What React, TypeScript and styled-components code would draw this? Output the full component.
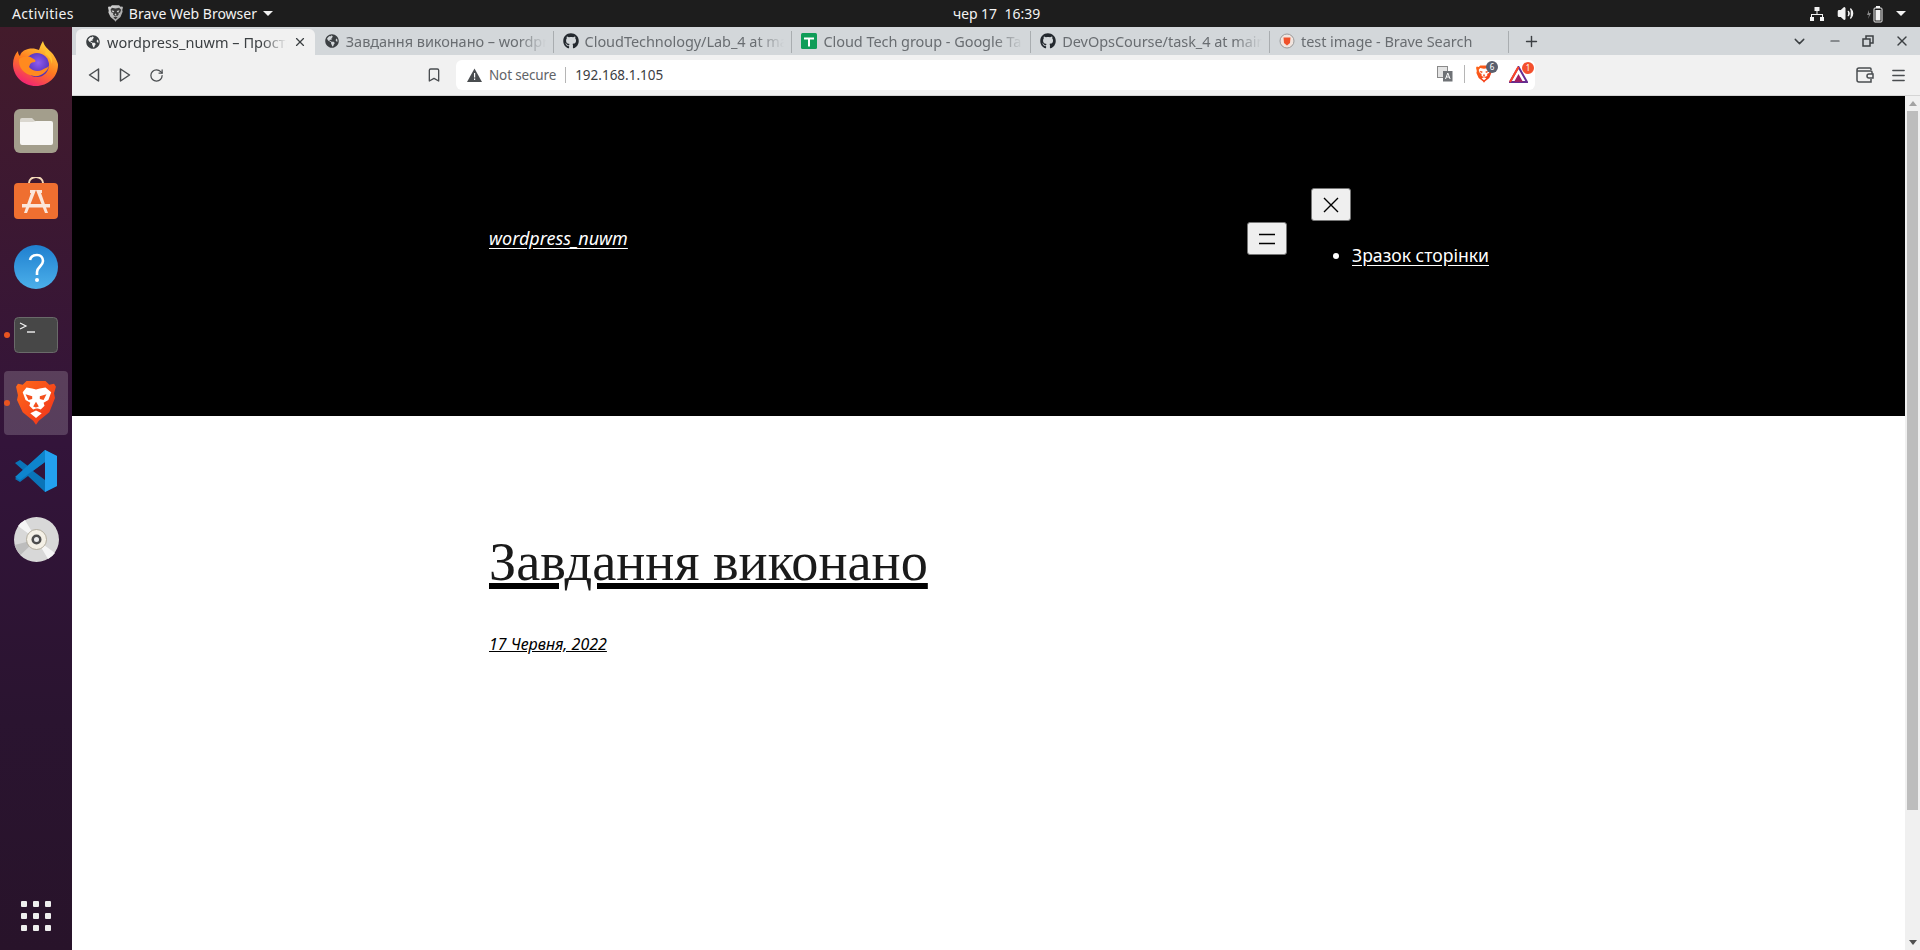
import React from 'react';
import styled, { createGlobalStyle } from 'styled-components';
import {
  Bookmark,
  ChevronDown,
  Menu,
  Minus,
  Plus,
  RotateCw,
  Volume2,
  X,
} from 'lucide-react';
import { FaGithub, FaGlobeAmericas } from 'react-icons/fa';

const UI_FONT = `"Noto Sans", "Open Sans", sans-serif`;

const GlobalStyle = createGlobalStyle`
  html, body {
    margin: 0;
    padding: 0;
    overflow: hidden;
    background: #fff;
  }
  * {
    box-sizing: border-box;
  }
`;

const Screen = styled.div`
  width: 1920px;
  height: 950px;
  display: flex;
  flex-direction: column;
  overflow: hidden;
  font-family: ${UI_FONT};
`;

/* ---------- gnome top bar ---------- */
const TopBar = styled.div`
  height: 27px;
  flex: none;
  display: grid;
  grid-template-columns: 953px auto 1fr;
  align-items: center;
  background: #1d1d1d;
  color: #f2f2f2;
  font-size: 14px;
`;
const TopLeft = styled.div`
  display: flex;
  align-items: center;
  padding-left: 12px;
`;
const Activities = styled.span`
  letter-spacing: 0.35px;
`;
const AppName = styled.div`
  display: flex;
  align-items: center;
  gap: 6px;
  margin-left: 34px;
`;
const Clock = styled.div`
  white-space: pre;
`;
const TopRight = styled.div`
  display: flex;
  align-items: center;
  justify-content: flex-end;
  gap: 12px;
  padding-right: 14px;
`;
const Caret = styled.span`
  width: 0;
  height: 0;
  border-left: 5px solid transparent;
  border-right: 5px solid transparent;
  border-top: 5px solid #f2f2f2;
`;

const Body = styled.div`
  flex: 1;
  display: flex;
  min-height: 0;
`;

/* ---------- dock ---------- */
const Dock = styled.div`
  width: 72px;
  flex: none;
  display: flex;
  flex-direction: column;
  align-items: center;
  background: linear-gradient(180deg, #431b2b 0%, #33143a 45%, #2a1430 75%, #28132a 100%);
`;
const DockItem = styled.div<{ $active?: boolean; $running?: boolean }>`
  position: relative;
  width: 64px;
  height: 64px;
  margin-bottom: 4px;
  display: flex;
  align-items: center;
  justify-content: center;
  border-radius: 4px;
  background: ${({ $active }) => ($active ? 'rgba(255,255,255,0.18)' : 'transparent')};
  &::before {
    content: '';
    display: ${({ $running }) => ($running ? 'block' : 'none')};
    position: absolute;
    left: 0;
    top: 29px;
    width: 6px;
    height: 6px;
    border-radius: 50%;
    background: #e95420;
  }
`;
const DockList = styled.div`
  padding-top: 4px;
`;
const AppGrid = styled.div`
  margin-top: auto;
  margin-bottom: 19px;
  display: grid;
  grid-template-columns: repeat(3, 6px);
  gap: 6px;
`;
const AppDot = styled.span`
  width: 6px;
  height: 6px;
  border-radius: 1px;
  background: #eeeeee;
`;

/* ---------- browser ---------- */
const BrowserWindow = styled.div`
  flex: 1;
  min-width: 0;
  display: flex;
  flex-direction: column;
`;
const TabStrip = styled.div`
  height: 28px;
  flex: none;
  display: flex;
  align-items: flex-end;
  background: #d3d7da;
  padding-left: 4px;
`;
const Tab = styled.div<{ $active?: boolean }>`
  width: 238.8px;
  height: ${({ $active }) => ($active ? '26px' : '28px')};
  flex: none;
  display: flex;
  align-items: center;
  gap: 6px;
  padding: 0 8px 0 9px;
  background: ${({ $active }) => ($active ? '#f1f1f1' : 'transparent')};
  border-radius: 6px 6px 0 0;
  color: ${({ $active }) => ($active ? '#3c4043' : '#696d71')};
  font-size: 14.5px;
  letter-spacing: ${({ $active }) => ($active ? '0.05px' : '-0.05px')};
  position: relative;
  &::after {
    content: '';
    display: ${({ $active }) => ($active ? 'none' : 'block')};
    position: absolute;
    right: 0;
    top: 4px;
    bottom: 2px;
    width: 1px;
    background: #a9adb0;
  }
`;
const TabIcon = styled.span`
  width: 16px;
  height: 16px;
  flex: none;
  display: flex;
  align-items: center;
  justify-content: center;
  color: #3c4043;
`;
const TabTitle = styled.span`
  flex: 1;
  min-width: 0;
  overflow: hidden;
  white-space: nowrap;
  mask-image: linear-gradient(90deg, #000 86%, transparent 100%);
`;
const StripActions = styled.div`
  flex: 1;
  height: 28px;
  display: flex;
  align-items: center;
  color: #3c4043;
  padding-left: 14px;
`;
const WindowButtons = styled.div`
  margin-left: auto;
  display: flex;
  align-items: center;
  gap: 20px;
  padding-right: 10px;
`;

const Toolbar = styled.div`
  height: 41px;
  flex: none;
  display: flex;
  align-items: center;
  background: #f1f1f1;
  border-bottom: 1px solid #d5d5d5;
  color: #4a4d50;
  padding-left: 15px;
`;
const NavButtons = styled.div`
  display: flex;
  align-items: center;
  gap: 17px;
  width: 369px;
`;
const BookmarkSlot = styled.span`
  display: flex;
  margin-left: auto;
  margin-right: 14px;
`;
const Omnibox = styled.div`
  width: 1079px;
  height: 30px;
  display: flex;
  align-items: center;
  background: #fff;
  border-radius: 6px;
  padding: 0 7px 0 11px;
  font-size: 13.5px;
  letter-spacing: -0.15px;
  margin-top: -1px;
`;
const SecurityText = styled.span`
  color: #5f6368;
  margin-left: 7px;
  padding-right: 9px;
  border-right: 1px solid #b5b5b5;
  line-height: 16px;
`;
const Url = styled.span`
  color: #3c4043;
  margin-left: 9px;
  letter-spacing: 0;
`;
const OmniRight = styled.div`
  margin-left: auto;
  display: flex;
  align-items: center;
`;
const OmniDivider = styled.span`
  width: 1px;
  height: 18px;
  background: #b5b5b5;
  margin: 0 11px 0 11px;
`;
const BadgeWrap = styled.span<{ $gap?: number }>`
  position: relative;
  display: flex;
  margin-left: ${({ $gap }) => $gap ?? 0}px;
`;
const Badge = styled.span<{ $bg: string }>`
  position: absolute;
  top: -4px;
  right: -6px;
  min-width: 12px;
  height: 12px;
  border-radius: 6px;
  background: ${({ $bg }) => $bg};
  color: #fff;
  font-size: 8px;
  line-height: 12px;
  text-align: center;
  letter-spacing: 0;
`;
const ToolbarRight = styled.div`
  margin-left: auto;
  display: flex;
  align-items: center;
  gap: 16px;
  padding-right: 13px;
`;

/* ---------- page ---------- */
const Viewport = styled.div`
  flex: 1;
  min-height: 0;
  display: flex;
`;
const Page = styled.div`
  flex: 1;
  min-width: 0;
  background: #fff;
`;
const Hero = styled.header`
  height: 320px;
  background: #000;
  color: #fff;
  display: flex;
  align-items: flex-start;
  padding: 92px 0 0 417px;
`;
const SiteTitle = styled.a`
  width: 758px;
  margin-top: 38px;
  font-size: 18px;
  line-height: 24px;
  font-style: italic;
  color: #fff;
  text-decoration: underline;
  text-underline-offset: 3px;
`;
const MenuButton = styled.button`
  width: 40px;
  height: 33px;
  padding: 0;
  flex: none;
  display: flex;
  align-items: center;
  justify-content: center;
  background: #efefef;
  border: 1px solid #767676;
  border-radius: 3px;
  color: #000;
`;
const OpenButton = styled(MenuButton)`
  margin-top: 34px;
  margin-right: 24px;
`;
const NavColumn = styled.div`
  display: flex;
  flex-direction: column;
`;
const NavList = styled.ul`
  margin: 18px 0 0;
  padding: 0 0 0 41px;
  font-size: 17.6px;
  line-height: 33px;
`;
const NavLink = styled.a`
  color: #fff;
  text-decoration: underline;
  text-underline-offset: 3px;
`;
const Main = styled.main`
  padding: 115px 0 0 417px;
`;
const PostTitle = styled.a`
  display: inline-block;
  font-family: "Liberation Serif", "Times New Roman", serif;
  font-size: 54.3px;
  line-height: 62px;
  font-weight: 400;
  color: #1a1a1a;
  text-decoration: underline #000;
  text-decoration-thickness: 6px;
  text-underline-offset: 3px;
`;
const PostDate = styled.a`
  display: block;
  margin-top: 39px;
  font-size: 16px;
  line-height: 24px;
  font-style: italic;
  color: #000;
  text-decoration: underline;
`;

const Scrollbar = styled.div`
  width: 15px;
  flex: none;
  display: flex;
  flex-direction: column;
  align-items: center;
  background: #f0f0f0;
`;
const ScrollUp = styled.span`
  margin-top: 5px;
  border-left: 4px solid transparent;
  border-right: 4px solid transparent;
  border-bottom: 5px solid #a3a3a3;
`;
const ScrollThumb = styled.div`
  width: 11px;
  height: 699px;
  margin-top: 5px;
  background: #bdbdbd;
`;
const ScrollDown = styled.span`
  margin-top: auto;
  margin-bottom: 5px;
  border-left: 4px solid transparent;
  border-right: 4px solid transparent;
  border-top: 5px solid #505050;
`;

/* ---------- drawn icons ---------- */
const BraveLogo: React.FC<{ size: number; mono?: boolean }> = ({ size, mono }) => (
  <svg width={size} height={size * 1.14} viewBox="0 0 42 48">
    <defs>
      <linearGradient id={mono ? 'brm' : 'brc'} x1="0" y1="0" x2="1" y2="1">
        <stop offset="0" stopColor={mono ? '#d8d8d8' : '#ff6a1a'} />
        <stop offset="1" stopColor={mono ? '#9b9b9b' : '#f0301a'} />
      </linearGradient>
    </defs>
    <path
      d="M11 1h20l4 4 5-1 2 3-2 7 1 5-6 15-11 9-3 4-3-4-11-9L1 21l1-5-2-9 2-3 5 1z"
      fill={`url(#${mono ? 'brm' : 'brc'})`}
    />
    <path
      d="M11 8l6 1 4 1 4-1 6-1 6 5-3 8-5 3 1 3-4 4-3-1h-2l-3 1-4-4 1-3-5-3-3-8z"
      fill={mono ? '#3a3a3a' : '#fff'}
    />
    <path
      d="M21 13v10l-3 5 3 1 3-1-3-5zM10 15l7 2v3l-4 1zM32 15l-7 2v3l4 1z"
      fill={mono ? '#cfcfcf' : '#f4511e'}
    />
    <path d="M15 35l6-3 6 3-6 5z" fill={mono ? '#3a3a3a' : '#fff'} />
  </svg>
);

const Firefox = () => (
  <svg width="46" height="46" viewBox="0 0 46 46">
    <defs>
      <linearGradient id="ffa" x1="0.7" y1="0" x2="0.2" y2="1">
        <stop offset="0" stopColor="#ffd43a" />
        <stop offset="0.5" stopColor="#ff7a1f" />
        <stop offset="1" stopColor="#f0167f" />
      </linearGradient>
      <radialGradient id="ffb" cx="0.55" cy="0.4" r="0.6">
        <stop offset="0" stopColor="#8f5cf0" />
        <stop offset="1" stopColor="#4b2bb0" />
      </radialGradient>
    </defs>
    <path
      d="M30 1c1 5 5 8 9 12 4 5 6 10 6 12 0 12-10 21-22 21C10 46 0 36 0 24 0 19 2 14 5 11c0 3 1 4 2 5 1-4 4-6 8-7 5-1 8 0 11 1 1-3 2-6 4-9z"
      fill="url(#ffa)"
    />
    <circle cx="24" cy="25" r="12" fill="url(#ffb)" />
    <path
      d="M6 19c5-3 10-3 13-1 4 2 4 3 3 4-5 0-5 3-6 5 3 4 9 5 13 3 3-2 5-2 7-4-2 6-8 11-15 10C11 35 5 27 6 19z"
      fill="#ff8a1f"
    />
    <path d="M33 8c4 4 7 9 6 16-1-4-3-8-7-10z" fill="#ffc12e" />
  </svg>
);

const Files = () => (
  <svg width="44" height="44" viewBox="0 0 44 44">
    <rect width="44" height="44" rx="6" fill="#a39e8c" />
    <path d="M6 15v-4a2 2 0 0 1 2-2h10l6 6z" fill="#dad7cf" />
    <path d="M6 13h13l3-1h15a2 2 0 0 1 2 2v20a2 2 0 0 1-2 2H8a2 2 0 0 1-2-2z" fill="#f7f6f4" />
  </svg>
);

const Software = () => (
  <svg width="44" height="44" viewBox="0 0 44 44">
    <path d="M15 7V6a7 6 0 0 1 14 0v1" fill="none" stroke="#f4d9b8" strokeWidth="2" />
    <rect y="6" width="44" height="36" rx="4" fill="#ef6f30" />
    <path
      d="M22 12v1L13 36h-3l7-20h-1v-3h6zM22 13l9 23h3l-7-20h1v-3z"
      fill="#fbe6da"
    />
    <rect x="8" y="27" width="28" height="3.5" fill="#fbe6da" />
  </svg>
);

const Help = () => (
  <svg width="44" height="44" viewBox="0 0 44 44">
    <defs>
      <linearGradient id="hlp" x1="0" y1="0" x2="0" y2="1">
        <stop offset="0" stopColor="#1f7fcf" />
        <stop offset="1" stopColor="#4cb0ea" />
      </linearGradient>
    </defs>
    <circle cx="22" cy="22" r="22" fill="url(#hlp)" />
    <path
      d="M16 15c1-4 4-5 7-5 4 0 6 3 6 6 0 5-6 6-6 11v3"
      fill="none"
      stroke="#fff"
      strokeWidth="2.6"
    />
    <circle cx="23" cy="35" r="2" fill="#fff" />
  </svg>
);

const Terminal = () => (
  <svg width="44" height="36" viewBox="0 0 44 36">
    <rect x="0.5" y="0.5" width="43" height="35" rx="4" fill="#474747" stroke="#6a6a6a" />
    <path d="M6 6l6 3-6 3" fill="none" stroke="#f2f2f2" strokeWidth="1.2" />
    <path d="M13 15h8" stroke="#f2f2f2" strokeWidth="1.4" />
  </svg>
);

const VsCode = () => (
  <svg width="42" height="42" viewBox="0 0 42 42">
    <path d="M30 0l12 6v30l-12 6-17-16-8 6-5-3 9-8-9-8 5-3 8 6z" fill="#0a74b8" />
    <path d="M30 0l12 6v30l-12 6z" fill="#23a0ef" />
    <path d="M30 12L18 21l12 9z" fill="#33143a" />
    <path d="M0 27l30-27v12L5 30z" fill="#0e85cd" />
  </svg>
);

const Disc = () => (
  <svg width="45" height="45" viewBox="0 0 45 45">
    <circle cx="22.5" cy="22.5" r="22.5" fill="#d8d8d8" />
    <path d="M4 9L22.5 22.5 11 3a22 22 0 0 0-7 6zM41 36L22.5 22.5 34 42a22 22 0 0 0 7-6z" fill="#f5f5f5" />
    <path d="M22.5 22.5L0.5 28a22 22 0 0 0 6 10z" fill="#bdbdbd" />
    <circle cx="22.5" cy="22.5" r="10" fill="#f4f0e6" stroke="#a69f8e" strokeWidth="0.8" />
    <circle cx="22.5" cy="22.5" r="5" fill="#4d4d4d" />
    <circle cx="22.5" cy="22.5" r="2.5" fill="#ededed" />
  </svg>
);

const NavArrow: React.FC<{ dir: 'left' | 'right' }> = ({ dir }) => (
  <svg width="14" height="16" viewBox="0 0 14 16">
    <path
      d={dir === 'left' ? 'M11.5 2v12L2.5 8z' : 'M2.5 2v12l9-6z'}
      fill="none"
      stroke="#4a4d50"
      strokeWidth="1.5"
      strokeLinejoin="round"
    />
  </svg>
);

const WarningIcon = () => (
  <svg width="15" height="14" viewBox="0 0 15 14">
    <path d="M7.5 0.5L15 14H0z" fill="#4a4d50" />
    <path d="M7 5h1.2v4.500H7zM7 10.500h1.2v1.500H7z" fill="#fff" />
  </svg>
);

const Sheets = () => (
  <svg width="16" height="16" viewBox="0 0 16 16">
    <rect width="16" height="16" rx="1.5" fill="#0f9d58" />
    <path d="M3 4.5h10v2H9v7H7v-7H3z" fill="#fff" />
  </svg>
);

const BraveFavicon = () => (
  <svg width="16" height="16" viewBox="0 0 16 16">
    <circle cx="8" cy="8" r="7" fill="#f1e4de" stroke="#9a9a9a" />
    <path d="M4.5 4.5h7L11 10 8 12.5 5 10z" fill="#f0512a" />
  </svg>
);

const Network = () => (
  <svg width="16" height="16" viewBox="0 0 16 16" fill="#f2f2f2">
    <rect x="5.5" y="1" width="5" height="4" />
    <rect x="1" y="11" width="4" height="4" />
    <rect x="11" y="11" width="4" height="4" />
    <path d="M7.5 5h1v3H14v3h-1V9H3v2H2V8h5.500z" />
  </svg>
);

const Battery = () => (
  <svg width="18" height="18" viewBox="0 0 18 18">
    <path d="M3 5L1 10h2l-1 4 3-6H3z" fill="#8a8a8a" />
    <rect x="8" y="3" width="8" height="14" rx="1" fill="none" stroke="#f2f2f2" />
    <rect x="10" y="1" width="4" height="2" fill="#f2f2f2" />
    <rect x="9.500" y="5" width="5" height="10.500" fill="#f2f2f2" />
  </svg>
);

const Translate = () => (
  <svg width="16" height="16" viewBox="0 0 16 16">
    <rect x="0.5" y="0.5" width="10" height="11" fill="#e4e4e4" stroke="#8a8a8a" />
    <rect x="6" y="5" width="9.500" height="10.500" fill="#6f7276" />
    <path d="M8.500 13l2.300-6 2.300 6M9.500 11h2.600" fill="none" stroke="#fff" strokeWidth="1" />
  </svg>
);

const BatLogo = () => (
  <svg width="19" height="17" viewBox="0 0 19 17">
    <path d="M9.500 1L18 16H1z" fill="none" stroke="#662d91" strokeWidth="2" />
    <path d="M9.500 1L1 16" stroke="#ff4724" strokeWidth="2" />
    <path d="M5 16h9L9.500 8z" fill="#9e1f63" />
  </svg>
);

const Wallet = () => (
  <svg width="18" height="16" viewBox="0 0 18 16" fill="none" stroke="#4a4d50" strokeWidth="1.5">
    <path d="M15 3V2a1 1 0 0 0-1-1H3a2 2 0 0 0-2 2v10a2 2 0 0 0 2 2h12v-3" />
    <path d="M1 4h14a1 1 0 0 1 1 1v2" />
    <path d="M17 7h-4a1.500 1.500 0 0 0 0 4h4z" />
  </svg>
);

const RestoreIcon = () => (
  <svg width="12" height="12" viewBox="0 0 12 12" fill="none" stroke="#3c4043" strokeWidth="1.5">
    <rect x="1" y="4" width="7" height="7" />
    <path d="M4 4V1h7v7H8" />
  </svg>
);

const tabs: { title: string; icon: React.ReactNode; active?: boolean }[] = [
  { title: 'wordpress_nuwm – Простий', icon: <FaGlobeAmericas size={14} />, active: true },
  { title: 'Завдання виконано – wordpress', icon: <FaGlobeAmericas size={14} /> },
  { title: 'CloudTechnology/Lab_4 at main', icon: <FaGithub size={16} color="#24292f" /> },
  { title: 'Cloud Tech group - Google Tables', icon: <Sheets /> },
  { title: 'DevOpsCourse/task_4 at main', icon: <FaGithub size={16} color="#24292f" /> },
  { title: 'test image - Brave Search', icon: <BraveFavicon /> },
];

const App: React.FC = () => (
  <Screen>
    <GlobalStyle />
    <TopBar>
      <TopLeft>
        <Activities>Activities</Activities>
        <AppName>
          <BraveLogo size={15} mono />
          Brave Web Browser
          <Caret />
        </AppName>
      </TopLeft>
      <Clock>чер 17  16:39</Clock>
      <TopRight>
        <Network />
        <Volume2 size={17} fill="#f2f2f2" color="#f2f2f2" />
        <Battery />
        <Caret />
      </TopRight>
    </TopBar>
    <Body>
      <Dock>
        <DockList>
          <DockItem>
            <Firefox />
          </DockItem>
          <DockItem>
            <Files />
          </DockItem>
          <DockItem>
            <Software />
          </DockItem>
          <DockItem>
            <Help />
          </DockItem>
          <DockItem $running>
            <Terminal />
          </DockItem>
          <DockItem $active $running>
            <BraveLogo size={40} />
          </DockItem>
          <DockItem>
            <VsCode />
          </DockItem>
          <DockItem>
            <Disc />
          </DockItem>
        </DockList>
        <AppGrid>
          {Array.from({ length: 9 }, (_, i) => (
            <AppDot key={i} />
          ))}
        </AppGrid>
      </Dock>
      <BrowserWindow>
        <TabStrip>
          {tabs.map((t) => (
            <Tab key={t.title} $active={t.active}>
              <TabIcon>{t.icon}</TabIcon>
              <TabTitle>{t.title}</TabTitle>
              {t.active && <X size={14} color="#3c4043" strokeWidth={2} />}
            </Tab>
          ))}
          <StripActions>
            <Plus size={17} strokeWidth={2} />
            <WindowButtons>
              <ChevronDown size={17} />
              <Minus size={14} strokeWidth={2} />
              <RestoreIcon />
              <X size={16} strokeWidth={2} />
            </WindowButtons>
          </StripActions>
        </TabStrip>
        <Toolbar>
          <NavButtons>
            <NavArrow dir="left" />
            <NavArrow dir="right" />
            <RotateCw size={15} strokeWidth={2} />
            <BookmarkSlot>
              <Bookmark size={16} strokeWidth={2} />
            </BookmarkSlot>
          </NavButtons>
          <Omnibox>
            <WarningIcon />
            <SecurityText>Not secure</SecurityText>
            <Url>192.168.1.105</Url>
            <OmniRight>
              <Translate />
              <OmniDivider />
              <BadgeWrap>
                <BraveLogo size={16} />
                <Badge $bg="#5a5f6e">6</Badge>
              </BadgeWrap>
              <BadgeWrap $gap={17}>
                <BatLogo />
                <Badge $bg="#f4502d">1</Badge>
              </BadgeWrap>
            </OmniRight>
          </Omnibox>
          <ToolbarRight>
            <Wallet />
            <Menu size={17} strokeWidth={2} />
          </ToolbarRight>
        </Toolbar>
        <Viewport>
          <Page>
            <Hero>
              <SiteTitle>wordpress_nuwm</SiteTitle>
              <OpenButton aria-label="open menu">
                <svg width="18" height="12" viewBox="0 0 18 12" stroke="#000" strokeWidth="1.5">
                  <path d="M1 1.500h16M1 10.500h16" />
                </svg>
              </OpenButton>
              <NavColumn>
                <MenuButton aria-label="close menu">
                  <svg width="16" height="16" viewBox="0 0 16 16" stroke="#000" strokeWidth="1.4">
                    <path d="M1 1l14 14M15 1L1 15" />
                  </svg>
                </MenuButton>
                <NavList>
                  <li>
                    <NavLink>Зразок сторінки</NavLink>
                  </li>
                </NavList>
              </NavColumn>
            </Hero>
            <Main>
              <PostTitle>Завдання виконано</PostTitle>
              <PostDate>17 Червня, 2022</PostDate>
            </Main>
          </Page>
          <Scrollbar>
            <ScrollUp />
            <ScrollThumb />
            <ScrollDown />
          </Scrollbar>
        </Viewport>
      </BrowserWindow>
    </Body>
  </Screen>
);

export default App;
